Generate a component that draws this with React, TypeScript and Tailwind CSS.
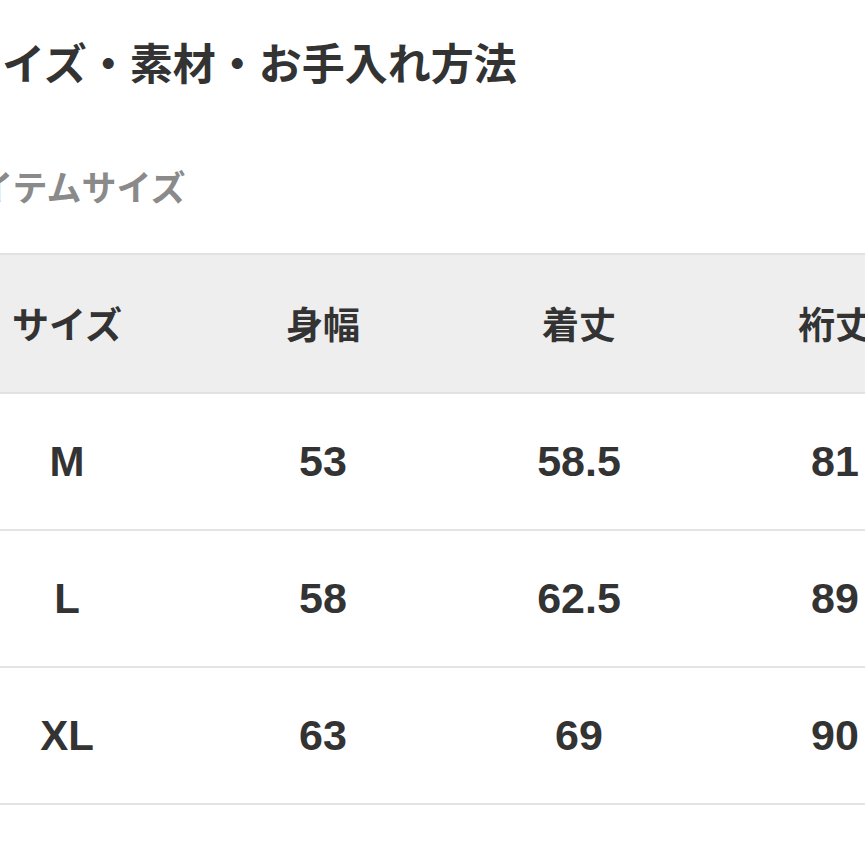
const rows = [
  { size: "M", width: "53", length: "58.5", sleeve: "81" },
  { size: "L", width: "58", length: "62.5", sleeve: "89" },
  { size: "XL", width: "63", length: "69", sleeve: "90" },
];

const headers = ["サイズ", "身幅", "着丈", "裄丈"];

export default function App() {
  return (
    <div className="h-[865px] w-[865px] overflow-hidden bg-white text-[#333] font-['Noto_Sans_CJK_JP','Noto_Sans',sans-serif]">
      <div className="ml-[-41px] pt-[40px]">
        <h2 className="text-[43px] font-bold leading-none whitespace-nowrap">
          サイズ・素材・お手入れ方法
        </h2>
      </div>

      <div className="ml-[-55px] mt-[85px]">
        <h3 className="text-[35px] font-bold leading-none whitespace-nowrap text-[#8a8a8a]">
          アイテムサイズ
        </h3>
      </div>

      <table className="ml-[-61px] mt-[50px] w-[1024px] table-fixed border-collapse">
        <thead>
          <tr className="h-[139px] border-y-2 border-[#e2e2e2] bg-[#eeeeee]">
            {headers.map((h) => (
              <th key={h} className="w-[256px] text-center text-[37px] font-bold">
                {h}
              </th>
            ))}
          </tr>
        </thead>
        <tbody className="font-['Liberation_Sans',Arial,sans-serif]">
          {rows.map((r) => (
            <tr key={r.size} className="h-[137px] border-b-2 border-[#e4e4e4]">
              <td className="text-center text-[42px] font-bold">{r.size}</td>
              <td className="text-center text-[43px] font-bold">{r.width}</td>
              <td className="text-center text-[43px] font-bold">{r.length}</td>
              <td className="text-center text-[43px] font-bold">{r.sleeve}</td>
            </tr>
          ))}
        </tbody>
      </table>
    </div>
  );
}
